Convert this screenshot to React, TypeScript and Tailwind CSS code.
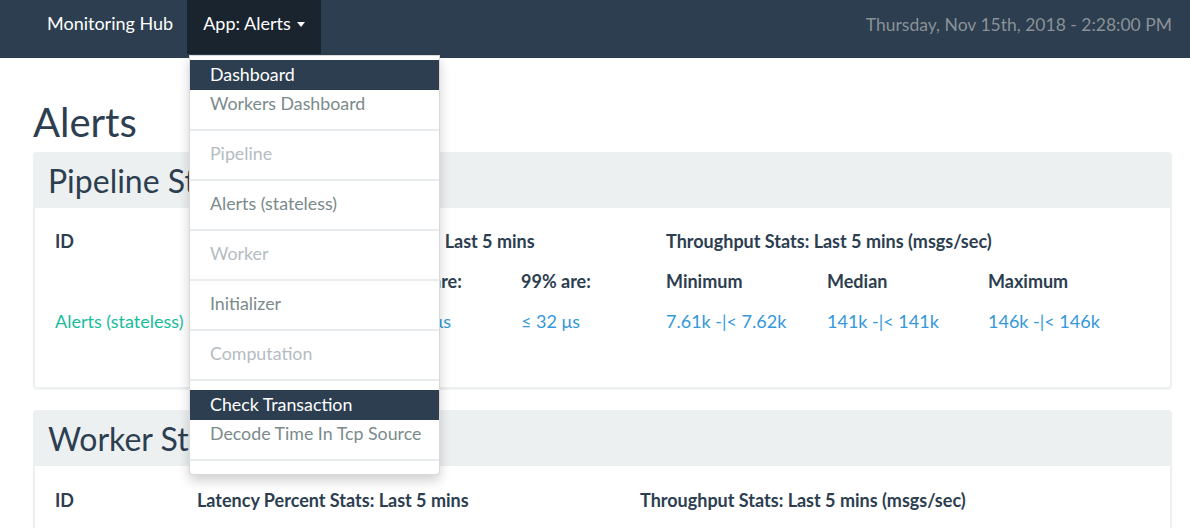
import React from "react";

const MENU: { label: string; kind: "header" | "item" | "disabled"; divider?: boolean }[] = [
  { label: "Dashboard", kind: "header" },
  { label: "Workers Dashboard", kind: "item", divider: true },
  { label: "Pipeline", kind: "disabled", divider: true },
  { label: "Alerts (stateless)", kind: "item", divider: true },
  { label: "Worker", kind: "disabled", divider: true },
  { label: "Initializer", kind: "item", divider: true },
  { label: "Computation", kind: "disabled", divider: true },
  { label: "Check Transaction", kind: "header" },
  { label: "Decode Time In Tcp Source", kind: "item", divider: true },
];

function Dropdown() {
  return (
    <div className="absolute left-[189px] top-[55px] z-20 w-[251px] rounded-b-[4px] border border-black/15 bg-white pt-[4px] pb-[4px] text-[17.8px] shadow-[0_6px_12px_rgba(0,0,0,0.18)]">
      {MENU.map((m) => (
        <div key={m.label}>
          {m.kind === "header" ? (
            <div className="h-[30px] whitespace-nowrap bg-[#2c3e50] px-[20px] leading-[28px] text-white">
              {m.label}
            </div>
          ) : (
            <div
              className={`h-[31px] whitespace-nowrap px-[20px] leading-[27px] ${
                m.kind === "disabled" ? "text-[#b4bcc2]" : "text-[#7b8a8b]"
              }`}
            >
              {m.label}
            </div>
          )}
          {m.divider && <div className="mt-[8px] mb-[9px] h-[2px] bg-[#e9ecef]" />}
        </div>
      ))}
    </div>
  );
}

function Panel({ title, children }: { title: string; children: React.ReactNode }) {
  return (
    <div className="rounded-[4px] border-2 border-[#ecf0f1] shadow-[0_1px_1px_rgba(0,0,0,0.05)]">
      <div className="h-[54px] bg-[#ecf0f1] pl-[13px] text-[32px] leading-[54px]">{title}</div>
      {children}
    </div>
  );
}

export default function App() {
  return (
    <div
      className="relative h-[528px] w-[1190px] overflow-hidden bg-white text-[18px] text-[#2c3e50]"
      style={{ fontFamily: "Lato, 'Open Sans', sans-serif" }}
    >
      {/* Navbar */}
      <nav className="flex h-[58px] items-start bg-[#2c3e50]">
        <span className="ml-[47px] mr-[14px] h-[54px] leading-[47px] text-white">Monitoring Hub</span>
        <span className="flex h-[54px] items-center gap-[6px] bg-[#1a242f] px-[16px] pb-[7px] text-white">
          App: Alerts
          <span className="mt-[2px] h-0 w-0 border-x-[4px] border-t-[5px] border-x-transparent border-t-white" />
        </span>
        <span className="ml-auto mr-[18px] text-[17.5px] leading-[50px] text-[#8b9196]">
          Thursday, Nov 15th, 2018 - 2:28:00 PM
        </span>
      </nav>

      <Dropdown />

      <main className="pl-[33px] pr-[18px]">
        <h1 className="mt-[41px] mb-[7px] text-[40px] leading-[46px]">Alerts</h1>

        <Panel title="Pipeline Stats">
          <div className="flex pt-[13px] pb-[46px] pl-[20px]">
            <div className="w-[208px]">
              <div className="h-[40px] leading-[40px] font-bold">ID</div>
              <div className="h-[40px]" />
              <div className="h-[40px] leading-[40px] text-[#18bc9c]">Alerts (stateless)</div>
            </div>
            <div className="w-[403px]">
              <div className="h-[40px] leading-[40px] font-bold">Latency Percent Stats: Last 5 mins</div>
              <div className="grid grid-cols-[129px_129px_129px]">
                <div className="h-[40px] leading-[40px] font-bold">50% are:</div>
                <div className="h-[40px] leading-[40px] font-bold">95% are:</div>
                <div className="h-[40px] leading-[40px] font-bold">99% are:</div>
                <div className="h-[40px] leading-[40px] text-[#3498db]">≤ 8 μs</div>
                <div className="h-[40px] leading-[40px] text-[#3498db]">≤ 16 μs</div>
                <div className="h-[40px] leading-[40px] text-[#3498db]">≤ 32 μs</div>
              </div>
            </div>
            <div>
              <div className="h-[40px] leading-[40px] font-bold">Throughput Stats: Last 5 mins (msgs/sec)</div>
              <div className="grid grid-cols-[161px_161px_161px]">
                <div className="h-[40px] leading-[40px] font-bold">Minimum</div>
                <div className="h-[40px] leading-[40px] font-bold">Median</div>
                <div className="h-[40px] leading-[40px] font-bold">Maximum</div>
                <div className="h-[40px] leading-[40px] text-[#3498db]">7.61k -|&lt; 7.62k</div>
                <div className="h-[40px] leading-[40px] text-[#3498db]">141k -|&lt; 141k</div>
                <div className="h-[40px] leading-[40px] text-[#3498db]">146k -|&lt; 146k</div>
              </div>
            </div>
          </div>
        </Panel>

        <div className="mt-[21px]">
          <Panel title="Worker Stats">
            <div className="flex pt-[14px] pb-[40px] pl-[20px]">
              <div className="w-[142px] h-[40px] leading-[40px] font-bold">ID</div>
              <div className="w-[443px] h-[40px] leading-[40px] font-bold">Latency Percent Stats: Last 5 mins</div>
              <div className="h-[40px] leading-[40px] font-bold">Throughput Stats: Last 5 mins (msgs/sec)</div>
            </div>
          </Panel>
        </div>
      </main>
    </div>
  );
}
